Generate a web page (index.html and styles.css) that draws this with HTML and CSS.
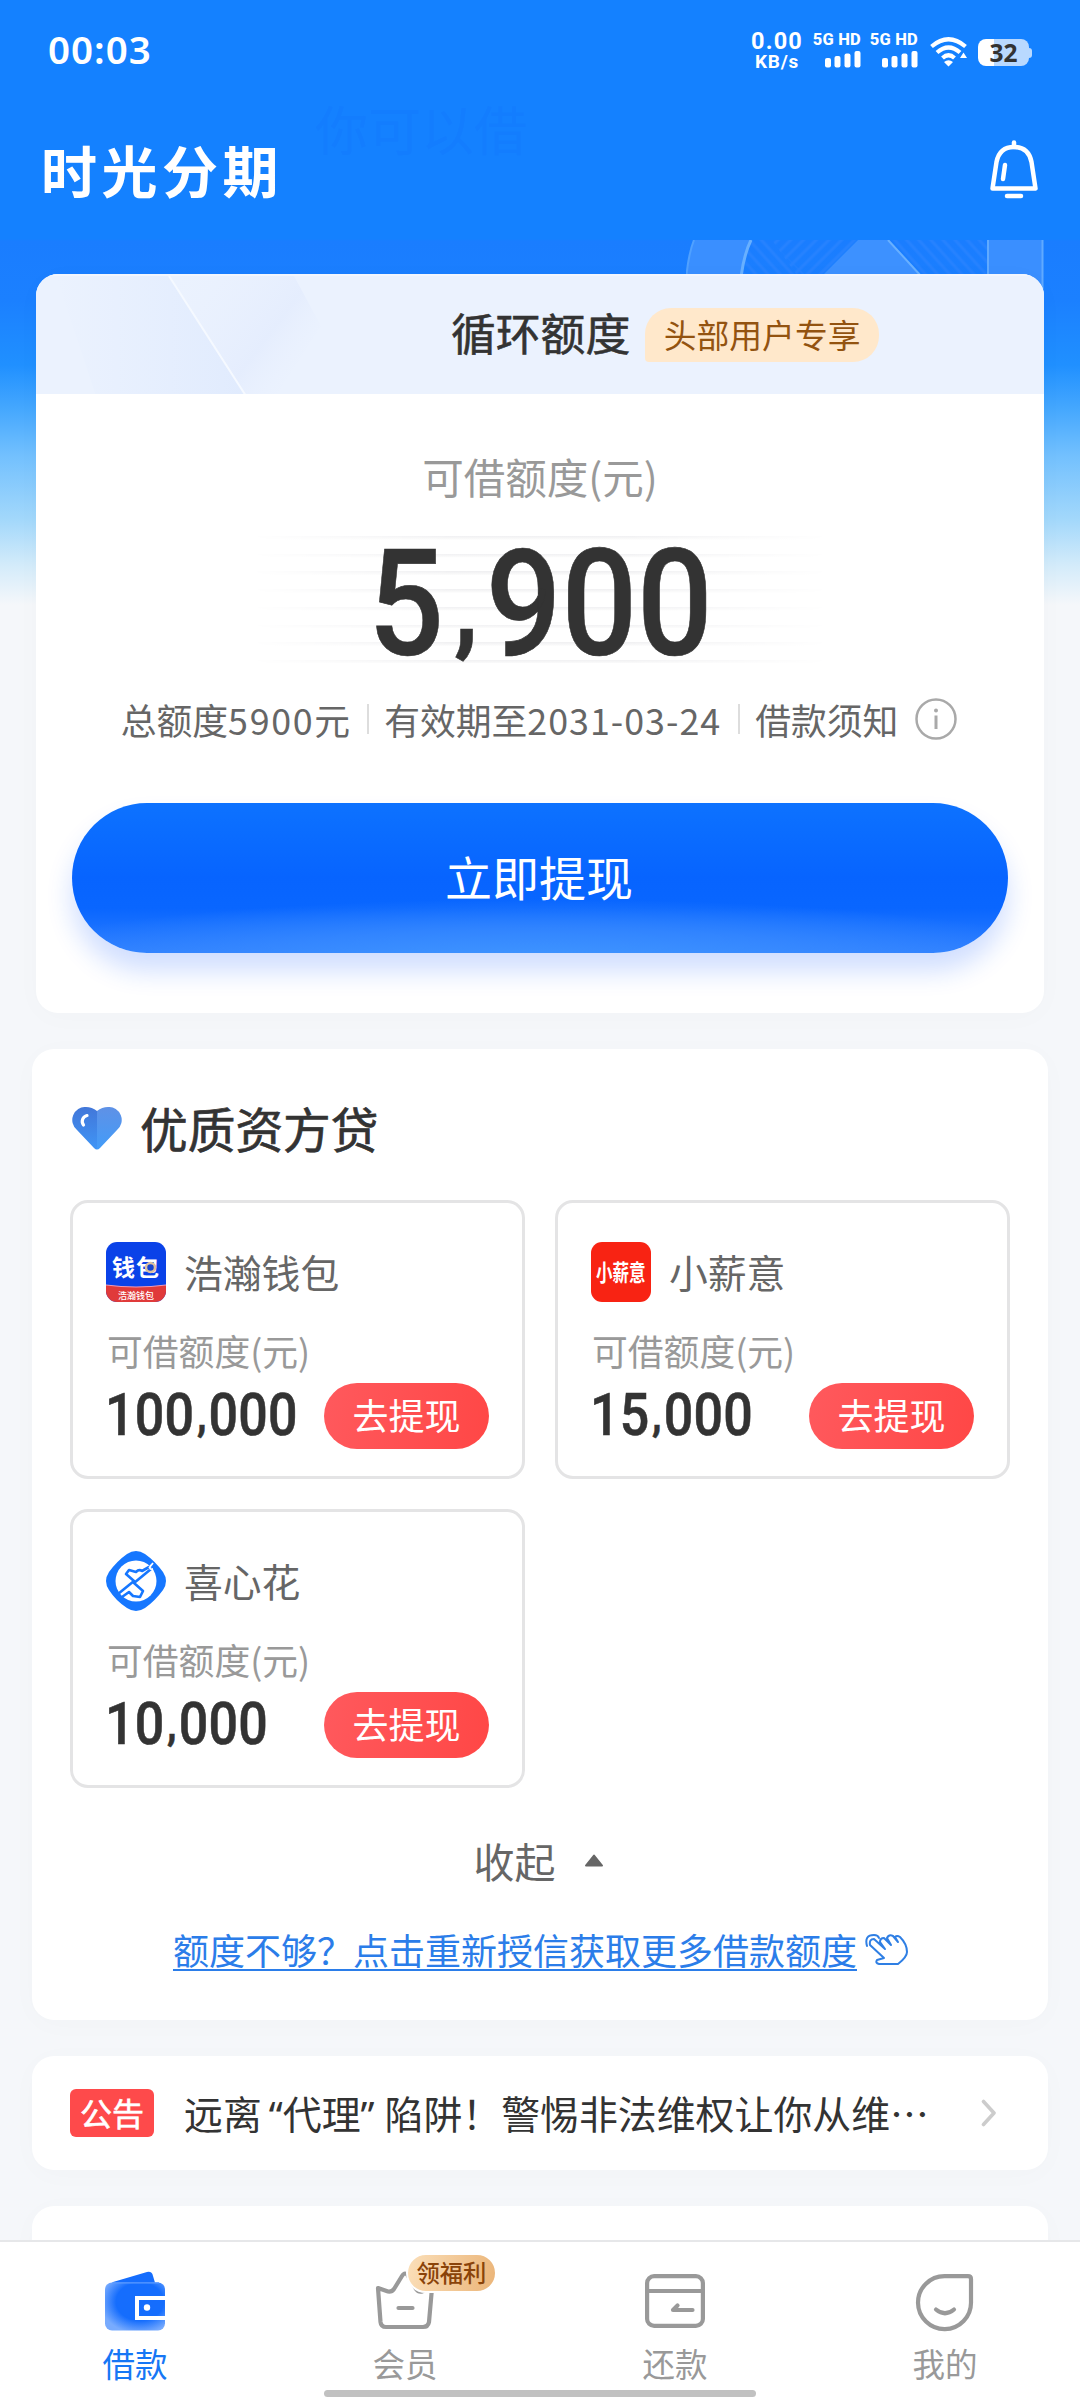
FILE: index.html
```html
<!DOCTYPE html>
<html lang="zh-CN">
<head>
<meta charset="utf-8">
<title>时光分期</title>
<link rel="stylesheet" href="styles.css">
</head>
<body>
<div class="screen">
  <main class="page">
    <div class="statusbar">
      <div class="clock">00:03</div>
      <div class="status-icons">
        <div class="speed"><span class="speed-num">0.00</span><span class="speed-unit">KB/s</span></div>
        <div class="signal"><span>5G HD</span>
          <svg width="36" height="17" viewBox="0 0 36 17"><g fill="#fff"><rect x="0" y="7" width="6" height="9.5" rx="2"/><rect x="9.5" y="5" width="6" height="11.500" rx="2"/><rect x="19.500" y="2.500" width="6" height="14" rx="2"/><rect x="29.500" y="0" width="6" height="16.500" rx="2"/></g></svg>
        </div>
        <div class="signal"><span>5G HD</span>
          <svg width="36" height="17" viewBox="0 0 36 17"><g fill="#fff"><rect x="0" y="7" width="6" height="9.5" rx="2"/><rect x="9.5" y="5" width="6" height="11.500" rx="2"/><rect x="19.500" y="2.500" width="6" height="14" rx="2"/><rect x="29.500" y="0" width="6" height="16.500" rx="2"/></g></svg>
        </div>
        <svg class="wifi" width="38" height="30" viewBox="0 0 38 30"><g fill="none" stroke="#fff" stroke-width="4.200"><path d="M1.500 9.500Q18.500-5 35.500 9.500"/><path d="M7 15.500Q18.500 5.500 30 15.500"/><path d="M12.500 21Q18.500 15.500 24.500 21"/></g><path d="M14 25Q18.500 21.500 23 25L18.500 29.500Z M33.500 15.500L37 21H30Z" fill="#fff"/></svg>
        <div class="battery"><span>32</span></div>
      </div>
    </div>

    <header class="brand">
      <h1>时光分期</h1>
      <svg width="48" height="60" viewBox="0 0 48 60" fill="none" stroke="#fff" stroke-linecap="round" stroke-linejoin="round"><path d="M24 2.500V7" stroke-width="4.500"/><path d="M2.500 48.500L6.500 22Q9.500 7 24 7T41.500 22L45.500 48.500Z" stroke-width="4.500"/><path d="M15 25L13 39" stroke-width="4.500"/><path d="M17 56H31" stroke-width="4.500"/></svg>
    </header>
    <div class="banner-greeting">你可以借</div>

    <svg class="banner-art" width="360" height="94" viewBox="0 0 360 94">
      <defs><pattern id="hatch" width="9" height="9" patternUnits="userSpaceOnUse" patternTransform="rotate(-42)"><path d="M2 0V9" stroke="#2682ff" stroke-width="3"/></pattern>
      <pattern id="hatch2" width="9" height="9" patternUnits="userSpaceOnUse" patternTransform="rotate(45)"><path d="M2 0V9" stroke="#2682ff" stroke-width="3"/></pattern></defs>
      <path d="M86 0H172L138 34H110Z" fill="url(#hatch2)"/>
      <path d="M65 0H84L118 34H54Z" fill="url(#hatch)"/>
      <path d="M205 0H304V60H236Z" fill="url(#hatch)"/>
      <path d="M8 0H66Q56 20 54 60H-1Q0 22 8 0Z" fill="#3a8fff"/>
      <path d="M65 0Q55 20 53 60" stroke="#68b0ff" stroke-width="3" fill="none"/>
      <path d="M8 0Q0 20-1 60" stroke="#50a1ff" stroke-width="2" fill="none"/>
      <path d="M172 0H203L236 36V60H112Z" fill="#3d91ff"/>
      <path d="M202 0L235 36" stroke="#68b0ff" stroke-width="2"/>
      <path d="M302 0H357V94H302Z" fill="#3a8fff"/>
      <path d="M302 0V60M356.500 0V60" stroke="#60aaff" stroke-width="2"/>
    </svg>

    <section class="card quota">
      <div class="quota-head">
        <svg class="quota-deco" width="300" height="118" viewBox="0 0 300 118">
          <defs><linearGradient id="d1" x1="0" y1="0" x2="1" y2="0"><stop offset="0" stop-color="#d9e6fe" stop-opacity="0"/><stop offset="1" stop-color="#d6e4fd"/></linearGradient>
          <linearGradient id="d2" x1="0" y1="0" x2="1" y2=".6"><stop offset="0" stop-color="#e9f0fe" stop-opacity="0"/><stop offset=".7" stop-color="#e1eafd" stop-opacity=".6"/><stop offset="1" stop-color="#e9f0fe" stop-opacity="0"/></linearGradient></defs>
          <path d="M20 0H133L210 120H60Z" fill="url(#d1)" opacity=".5"/>
          <path d="M133 0H258L285 50L240 120H210Z" fill="url(#d2)"/>
          <path d="M133 0L210 120" stroke="#f5f9ff" stroke-width="2"/>
        </svg>
        <h2>循环额度</h2><span class="vip">头部用户专享</span>
      </div>
      <div class="quota-label">可借额度(元)</div>
      <div class="quota-amount"><span class="din">5<i>,</i>900</span></div>
      <div class="quota-info">
        <span>总额度<b>5900</b>元</span><span>有效期至<b class="date">2031-03-24</b></span><span>借款须知</span>
        <svg width="42" height="42" viewBox="0 0 42 42" fill="none" stroke="#a9a9a9"><circle cx="21" cy="21" r="19.500" stroke-width="2.500"/><path d="M21 17.500V31" stroke-width="3"/><circle cx="21" cy="12.500" r="2" fill="#a9a9a9" stroke="none"/></svg>
      </div>
      <button class="withdraw">立即提现</button>
    </section>

    <section class="card lenders">
      <div class="section-title">
        <svg width="50" height="44" viewBox="0 0 50 44"><defs><linearGradient id="h1" x1="0" y1="0" x2="0" y2="1"><stop offset="0" stop-color="#4277d9"/><stop offset="1" stop-color="#3f95f6"/></linearGradient><linearGradient id="h2" x1="0" y1="0" x2="0" y2="1"><stop offset="0" stop-color="#5f91e6"/><stop offset="1" stop-color="#429cf9"/></linearGradient></defs>
          <path d="M25 4Q20 0 14 0A13 13 0 0 0 5 23L22 41Q23.500 42.500 25 42.500Z" fill="url(#h1)"/><path d="M25 4Q30 0 36 0A13 13 0 0 1 45 23L28 41Q26.500 42.500 25 42.500Z" fill="url(#h2)"/><path d="M15 8.500A6 6 0 0 0 11.500 18" fill="none" stroke="#fff" stroke-width="3.200" stroke-linecap="round"/></svg>
        <h2>优质资方贷</h2>
      </div>
      <div class="lender-grid">
        <article class="lender">
          <div class="lender-name">
            <svg width="60" height="60" viewBox="0 0 60 60"><defs><clipPath id="lc"><rect width="60" height="60" rx="11"/></clipPath></defs><g clip-path="url(#lc)"><rect width="60" height="60" fill="#0a42e8"/><path d="M0 43Q30 47 60 43V60H0Z" fill="#e03a3a"/><path d="M0 43Q30 47 60 43" stroke="#f29ab4" fill="none"/></g><text class="logo-qb" x="6" y="33.500">钱包</text><circle cx="44.500" cy="25.500" r="4.500" fill="#1745d0" stroke="#dcc0a0" stroke-width="2.500"/><text class="logo-sub" x="12" y="56.500">浩瀚钱包</text></svg>
            <span>浩瀚钱包</span>
          </div>
          <div class="lender-label">可借额度(元)</div>
          <div class="lender-row"><span class="din">100<i>,</i>000</span><button>去提现</button></div>
        </article>
        <article class="lender">
          <div class="lender-name">
            <svg width="60" height="60" viewBox="0 0 60 60"><rect width="60" height="60" rx="11" fill="#f82313"/><text class="logo-xxy" transform="translate(5 39) scale(.72 1)">小薪意</text></svg>
            <span>小薪意</span>
          </div>
          <div class="lender-label">可借额度(元)</div>
          <div class="lender-row"><span class="din">15<i>,</i>000</span><button>去提现</button></div>
        </article>
        <article class="lender">
          <div class="lender-name">
            <svg width="60" height="60" viewBox="0 0 60 60"><path d="M21 3Q30-3 39 3Q49 10 57 21Q63 30 57 39Q49 50 39 57Q30 63 21 57Q10 50 3 39Q-3 30 3 21Q11 10 21 3Z" fill="#1677ff"/><circle cx="30" cy="30" r="20.500" fill="#fff"/><g fill="none" stroke="#1677ff" stroke-width="2.600" stroke-linejoin="round"><path d="M12 43L28 30L20 23L23 19L30 21Q33 18 36 20L43 16L45 18L28 32L37 40L34 46L27 45L23 41L16 46"/><path d="M47 12L43 17M45 14Q42 19 47 18" stroke="#fff" stroke-width="1.800"/></g></svg>
            <span>喜心花</span>
          </div>
          <div class="lender-label">可借额度(元)</div>
          <div class="lender-row"><span class="din">10<i>,</i>000</span><button>去提现</button></div>
        </article>
      </div>
      <div class="collapse">收起<svg width="20" height="13" viewBox="0 0 20 13"><path d="M10 1.500L18 11.500H2Z" fill="#666" stroke="#666" stroke-width="2" stroke-linejoin="round"/></svg></div>
      <div class="more"><a>额度不够？点击重新授信获取更多借款额度</a>
        <svg width="44" height="32" viewBox="0 0 44 32" fill="none" stroke="#2f7fe4" stroke-width="2" stroke-linecap="round" stroke-linejoin="round"><path d="M2 12Q-1 1 9 1Q13 1 14 4"/><path d="M12 26L19 24L5 11Q4 5 9 5L20 15L15 8Q15 4 19 4L26 11L22 4Q24 0 28 2L33 8L30 3Q32 1 35 3Q42 10 42 18Q42 23 33 30H14Q10 29 12 26Z"/></svg>
      </div>
    </section>

    <section class="card notice">
      <span class="tag">公告</span>
      <p>远离<q class="lq">“</q>代理<q class="rq">”</q>陷阱！警惕非法维权让你从维<em>…</em></p>
      <svg width="16" height="28" viewBox="0 0 16 28"><path d="M2.500 2.500L13 14L2.500 25.500" fill="none" stroke="#ccc" stroke-width="3.600" stroke-linecap="round" stroke-linejoin="round"/></svg>
    </section>

    <section class="card next"></section>
  </main>

  <nav class="tabbar">
    <a class="tab active">
      <svg width="60" height="64" viewBox="0 0 60 64"><defs><radialGradient id="w" cx=".58" cy=".4" r=".66"><stop offset=".6" stop-color="#156dfd"/><stop offset="1" stop-color="#78abfe"/></radialGradient></defs><path d="M8 14L42 4Q47 3 48 8L51 18H8Z" fill="#156dfd"/><rect y="14.500" width="60" height="48" rx="7" fill="url(#w)"/><path d="M7 14.800H54" stroke="#5c9bff" stroke-width="1.300"/><path d="M60 30H32V50H60" fill="none" stroke="#fff" stroke-width="4"/><circle cx="42" cy="39.500" r="3.200" fill="#fff"/></svg>
      <span>借款</span>
    </a>
    <a class="tab">
      <svg width="60" height="64" viewBox="0 0 60 64" fill="none" stroke="#999" stroke-width="4.200" stroke-linecap="round" stroke-linejoin="round"><path d="M3 20L13 23.500Q17 24 19 21L27 8Q30 3 33 8L41 21Q44 25 48 23L57 20L54 54Q53 59 48 59H11Q6 59 5.500 54Z"/><path d="M23.500 40H37.500"/></svg>
      <span>会员</span>
      <div class="badge">领福利</div>
    </a>
    <a class="tab">
      <svg width="60" height="64" viewBox="0 0 60 64" fill="none" stroke="#999" stroke-width="4.200" stroke-linecap="round" stroke-linejoin="round"><rect x="2.100" y="8.100" width="55.800" height="49.800" rx="7"/><path d="M3 23H57"/><path d="M47.500 42H28L32.500 37.500"/></svg>
      <span>还款</span>
    </a>
    <a class="tab">
      <svg width="60" height="64" viewBox="0 0 60 64" fill="none" stroke="#999" stroke-width="4.200" stroke-linecap="round" stroke-linejoin="round"><path d="M29.500 8.100H53Q56 8.100 56 11V34A26.500 26.500 0 1 1 29.500 8.100Z"/><path d="M21 41.500Q30 49 39 41.500"/></svg>
      <span>我的</span>
    </a>
    <div class="home-bar"></div>
  </nav>
</div>
</body>
</html>
```
FILE: styles.css
```css
* { box-sizing: border-box; margin: 0; padding: 0; }
body { font-family: "Noto Sans CJK SC", sans-serif; color: #333; }
svg { display: block; flex: none; }
button { border: 0; font-family: inherit; color: #fff; }
h1, h2 { font-weight: 400; }

.screen { width: 1080px; height: 2400px; display: flex; flex-direction: column; overflow: hidden; }
.page {
  position: relative; flex: 1; min-height: 0; overflow: hidden;
  background: linear-gradient(#1481ff 0, #1481ff 239px, #1a7dff 241px, #1b80ff 300px, #2090ff 365px, #46a8fe 410px, #72c0fe 455px, #a3d8fb 520px, #d3ebfa 565px, #f5f7fa 605px);
}

.statusbar { height: 104px; padding: 0 48px 0 48px; display: flex; justify-content: space-between; color: #fff; font-family: "Noto Sans", sans-serif; }
.clock { font-size: 38.500px; font-weight: 600; line-height: 99px; letter-spacing: 1px; }
.status-icons { display: flex; height: 104px; align-items: flex-start; font-family: Roboto, sans-serif; }
.speed { width: 56px; padding-top: 28px; display: flex; flex-direction: column; align-items: center; font-weight: 700; margin-right: 6px; }
.speed-num { font-size: 23.500px; line-height: 27px; letter-spacing: 1.200px; }
.speed-unit { font-size: 19px; line-height: 14px; letter-spacing: .8px; }
.signal { width: 50px; margin-right: 7px; padding-top: 32px; display: flex; flex-direction: column; align-items: flex-end; }
.signal span { font-size: 16.500px; font-weight: 800; line-height: 16px; letter-spacing: .2px; white-space: nowrap; margin-bottom: 3px; }
.wifi { margin: 37px 10px 0 5px; }
.battery { width: 51px; height: 27px; margin-top: 39px; margin-right: 3px; border-radius: 8px; background: linear-gradient(90deg, #fff 32%, #b9d9ff 32%); color: #333; text-align: center; position: relative; font-family: "Noto Sans", sans-serif; }
.battery::after { content: ""; position: absolute; right: -3px; top: 9px; width: 3px; height: 10px; border-radius: 0 3px 3px 0; background: #b9d9ff; }
.battery span { display: block; font-size: 24.500px; font-weight: 700; line-height: 27px; }

.brand { height: 170px; padding: 36px 42px 0 41px; display: flex; justify-content: space-between; }
.brand h1 { color: #fff; font-size: 56px; font-weight: 700; line-height: 58px; letter-spacing: 4.500px; }
.banner-greeting { position: absolute; left: 315px; top: 98px; font-size: 53px; line-height: 60px; color: rgba(0, 60, 220, .04); }
.banner-art { position: absolute; left: 686px; top: 240px; }

.card { background: #fff; border-radius: 22px; margin: 0 32px 36px; box-shadow: 0 4px 30px rgba(0, 0, 0, .018); }
.quota { position: relative; height: 739px; margin: 0 36px 36px; overflow: hidden; }
.quota-head { position: relative; height: 120px; background: #ebf2fe; display: flex; align-items: center; padding-left: 415px; gap: 15px; border-top: 2px solid #f2f6fe; }
.quota-deco { position: absolute; left: 0; top: 0; }
.quota-head h2 { font-size: 44.800px; line-height: 60px; position: relative; margin-top: -6px; -webkit-text-stroke: .6px #333; }
.vip { height: 54px; line-height: 51px; padding: 0 18.500px; border-radius: 26px 26px 26px 4px; background: #ffe8cb; color: #935310; font-size: 32.800px; white-space: nowrap; }
.quota-label { margin-top: 52px; text-align: center; font-size: 41.500px; line-height: 60px; color: #999; }
.quota-amount { position: relative; height: 130px; margin: 27px auto 0; width: 580px; display: flex; justify-content: center; }
.quota-amount::before {
  content: ""; position: absolute; inset: 3px 0 0;
  background: repeating-linear-gradient(#f0f0f2 0, #fafafa 3px, #fff 4px, #fff 17.700px);
  -webkit-mask-image: linear-gradient(90deg, transparent, #000 35%, #000 65%, transparent);
  mask-image: linear-gradient(90deg, transparent, #000 35%, #000 65%, transparent);
}
.din { font-family: Roboto, sans-serif; font-weight: 500; color: #333; white-space: nowrap; transform: scaleX(.9); -webkit-text-stroke: .6px #333; }
.din i { position: relative; top: -.12em; font-style: normal; font-size: .72em; font-weight: 800; }
.quota-amount .din { position: relative; font-size: 148px; line-height: 144px; }
.quota-amount i { margin: 0 8px 0 11px; }
.quota-info { margin-top: 35px; height: 42px; display: flex; align-items: center; justify-content: center; font-size: 35.800px; line-height: 42px; color: #666; padding-right: 2px; }
.quota-info b { font-weight: 400; letter-spacing: 1.700px; }
.quota-info .date { letter-spacing: 1px; }
.quota-info span { margin-top: -1px; }
.quota-info span + span { padding-left: 17px; margin-left: 17px; background: linear-gradient(#ddd, #ddd) 0 50% / 2px 30px no-repeat; }
.quota-info svg { margin-left: 17px; }
.withdraw {
  display: block; width: 936px; height: 150px; margin: 63px auto 0; border-radius: 75px; font-size: 47px; line-height: 146px; padding: 0 2px 5px 0;
  background: radial-gradient(ellipse 60% 44% at 50% 108%, #4097ff, rgba(58, 140, 255, .7) 55%, rgba(20, 110, 255, 0)), linear-gradient(#0d72ff, #0764ff 50%, #0966ff 70%, #2e7eff);
  box-shadow: 0 18px 26px rgba(20, 90, 255, .2);
}

.lenders { height: 971px; padding: 52px 38px 0; }
.section-title { height: 60px; display: flex; align-items: center; gap: 18px; padding-left: 2px; }
.section-title svg { margin-top: -5px; }
.section-title h2 { font-size: 47.700px; line-height: 60px; margin-top: -7px; -webkit-text-stroke: .7px #333; }
.lender-grid { margin-top: 39px; display: grid; grid-template-columns: 455px 455px; gap: 30px; }
.lender { height: 279px; border: 3px solid #e4e4e5; border-radius: 18px; padding: 39px 33px 0 33px; }
.lender-name { display: flex; align-items: center; gap: 18px; height: 60px; font-size: 38.800px; color: #666; }
.lender-name span { line-height: 56px; margin-top: -3px; }
.lender-label { margin-top: 24px; margin-left: 1px; font-size: 35.800px; line-height: 48px; color: #999; }
.lender-row { height: 66px; margin-top: 9px; display: flex; justify-content: space-between; align-items: center; }
.lender-row .din { width: 170px; font-size: 60px; line-height: 66px; transform-origin: 0 50%; transform: translate(-1px, 2px) scaleX(.865); letter-spacing: .3px; }
.lender-row i { margin: 0 2px 0 3px; }
.lender-row button { flex: none; width: 165px; height: 66px; border-radius: 33px; background: linear-gradient(100deg, #ff595d, #ff4746); font-size: 36px; line-height: 61px; padding-bottom: 3px; }
.logo-qb { font-size: 23px; font-weight: 700; fill: #fff; letter-spacing: 1px; }
.logo-sub { font-size: 9px; fill: #fff; font-weight: 500; }
.logo-xxy { font-size: 23px; font-weight: 700; fill: #fff; }
.collapse { margin-top: 42px; height: 60px; display: flex; align-items: center; justify-content: center; gap: 28px; font-size: 41px; color: #666; padding-right: 3px; }
.more { margin-top: 34px; height: 50px; display: flex; align-items: center; justify-content: center; gap: 8px; font-size: 36px; line-height: 50px; color: #2b7de9; padding-left: 2px; }
.more a { text-decoration: underline; text-decoration-thickness: 2px; text-underline-offset: 4px; white-space: nowrap; }
.more svg { margin-top: 1px; }

.notice { height: 114px; padding: 0 51px 0 38px; display: flex; align-items: center; }
.tag { width: 84px; height: 48px; border-radius: 6px; background: #fe4a4b; color: #fff; font-size: 32px; line-height: 46px; text-align: center; -webkit-text-stroke: .6px #fff; }
.notice p { flex: 1; margin-left: 30px; font-size: 38.900px; line-height: 56px; white-space: nowrap; }
.notice q { quotes: none; font-family: "Noto Sans", sans-serif; }
.lq { margin-left: 7px; }
.rq { margin-right: 10px; }
.notice em { font-style: normal; font-family: "Noto Sans CJK SC", sans-serif; }
.next { height: 200px; }

.tabbar { position: relative; height: 160px; flex: none; background: #fff; border-top: 2px solid #e6e7e9; display: grid; grid-template-columns: repeat(4, 1fr); }
.tab { position: relative; display: flex; flex-direction: column; align-items: center; padding-top: 26px; color: #999; }
.tab span { margin-top: 8px; font-size: 32.500px; line-height: 46px; }
.tab.active span { color: #1677f5; }
.badge { position: absolute; left: 136px; top: 11px; height: 40px; padding: 0 8.500px; border: 2px solid #fff; border-radius: 20px; background: linear-gradient(100deg, #fbdfb9, #ebb579); color: #8a4309; font-size: 23.300px; line-height: 34px; font-weight: 500; white-space: nowrap; }
.home-bar { position: absolute; left: 324px; top: 148px; width: 432px; height: 7px; border-radius: 4px; background: #c1c1c1; }
```
